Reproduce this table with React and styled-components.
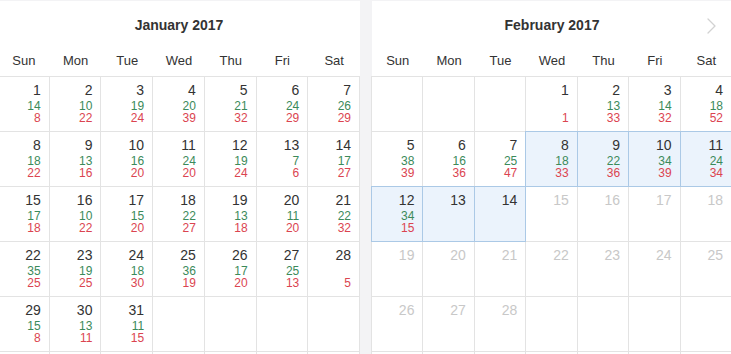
import React from "react";
import styled, { createGlobalStyle } from "styled-components";

const Global = createGlobalStyle`
  html, body {
    margin: 0;
    padding: 0;
    overflow: hidden;
    background: #f3f3f5;
    font-family: "Liberation Sans", Arial, sans-serif;
  }
`;

const Page = styled.div`
  display: flex;
  gap: 12px;
  margin-left: -2px;
  padding-top: 1px;
  width: 760px;
`;

const Calendar = styled.section`
  width: ${(p) => p.$width}px;
  flex: none;
  background: #fff;
`;

const TitleRow = styled.div`
  display: grid;
  grid-template-columns: 1fr auto 1fr;
  align-items: center;
  height: 43px;
`;

const Title = styled.h2`
  grid-column: 2;
  margin: 0;
  padding-top: 4px;
  font-size: 14px;
  line-height: 20px;
  font-weight: bold;
  color: #333;
`;

const NavButton = styled.button`
  grid-column: 3;
  justify-self: end;
  margin-right: 15px;
  margin-top: 7px;
  padding: 0;
  border: 0;
  background: none;
  width: 12px;
  height: 18px;
  display: flex;
  align-items: center;
  justify-content: center;
  cursor: pointer;
`;

const WeekHeader = styled.div`
  display: grid;
  grid-template-columns: repeat(7, 1fr);
  height: 33px;
  align-items: center;
`;

const WeekLabel = styled.div`
  text-align: center;
  font-size: 13px;
  line-height: 16px;
  color: #333;
  padding-top: 1px;
`;

const Grid = styled.div`
  display: grid;
  grid-template-columns: repeat(7, 1fr);
  grid-auto-rows: 55px;
`;

const Cell = styled.div`
  position: relative;
  z-index: ${(p) => (p.$selected ? 1 : 0)};
  margin: -1px 0 0 -1px;
  border: 1px solid ${(p) => (p.$selected ? "#abc9e6" : "#e3e3e3")};
  background: ${(p) => (p.$selected ? "#ebf3fc" : "#fff")};
  padding: 3px 8px 0 0;
  text-align: right;
`;

const DayNum = styled.div`
  font-size: 14px;
  line-height: 20px;
  color: ${(p) => (p.$disabled ? "#c8c8c8" : "#333")};
`;

const Stat = styled.div`
  font-size: 12px;
  line-height: 12px;
  height: 12px;
  color: ${(p) => (p.$tone === "green" ? "#3b8a5a" : "#db4450")};
  &:first-of-type {
    margin-top: 1px;
  }
`;

const WEEKDAYS = ["Sun", "Mon", "Tue", "Wed", "Thu", "Fri", "Sat"];

const months = [
  {
    title: "January 2017",
    width: 362,
    start: 0,
    days: 31,
    data: {
      1: [14, 8], 2: [10, 22], 3: [19, 24], 4: [20, 39], 5: [21, 32], 6: [24, 29], 7: [26, 29],
      8: [18, 22], 9: [13, 16], 10: [16, 20], 11: [24, 20], 12: [19, 24], 13: [7, 6], 14: [17, 27],
      15: [17, 18], 16: [10, 22], 17: [15, 20], 18: [22, 27], 19: [13, 18], 20: [11, 20], 21: [22, 32],
      22: [35, 25], 23: [19, 25], 24: [18, 30], 25: [36, 19], 26: [17, 20], 27: [25, 13], 28: [null, 5],
      29: [15, 8], 30: [13, 11], 31: [11, 15],
    },
    disabledFrom: 99,
    selected: [],
    nav: false,
  },
  {
    title: "February 2017",
    width: 360,
    start: 3,
    days: 28,
    data: {
      1: [null, 1], 2: [13, 33], 3: [14, 32], 4: [18, 52],
      5: [38, 39], 6: [16, 36], 7: [25, 47], 8: [18, 33], 9: [22, 36], 10: [34, 39], 11: [24, 34],
      12: [34, 15],
    },
    disabledFrom: 15,
    selected: [8, 14],
    nav: true,
  },
];

function Chevron() {
  return (
    <svg width="9" height="16" viewBox="0 0 9 16" fill="none">
      <path d="M1 1l7 7-7 7" stroke="#d2d2d2" strokeWidth="1.3" strokeLinecap="round" strokeLinejoin="round" />
    </svg>
  );
}

function Month({ m }) {
  const cells = [];
  for (let i = 0; i < 42; i++) {
    const d = i - m.start + 1;
    if (d < 1 || d > m.days) {
      cells.push(<Cell key={i} />);
      continue;
    }
    const disabled = d >= m.disabledFrom;
    const selected = m.selected.length > 0 && d >= m.selected[0] && d <= m.selected[1];
    const stats = m.data[d];
    cells.push(
      <Cell key={i} $selected={selected}>
        <DayNum $disabled={disabled}>{d}</DayNum>
        {stats && (
          <>
            <Stat $tone="green">{stats[0] ?? ""}</Stat>
            <Stat $tone="red">{stats[1] ?? ""}</Stat>
          </>
        )}
      </Cell>
    );
  }
  return (
    <Calendar $width={m.width}>
      <TitleRow>
        <Title>{m.title}</Title>
        {m.nav && (
          <NavButton aria-label="Next month">
            <Chevron />
          </NavButton>
        )}
      </TitleRow>
      <WeekHeader>
        {WEEKDAYS.map((w) => (
          <WeekLabel key={w}>{w}</WeekLabel>
        ))}
      </WeekHeader>
      <Grid>{cells}</Grid>
    </Calendar>
  );
}

export default function App() {
  return (
    <>
      <Global />
      <Page>
        {months.map((m) => (
          <Month key={m.title} m={m} />
        ))}
      </Page>
    </>
  );
}
